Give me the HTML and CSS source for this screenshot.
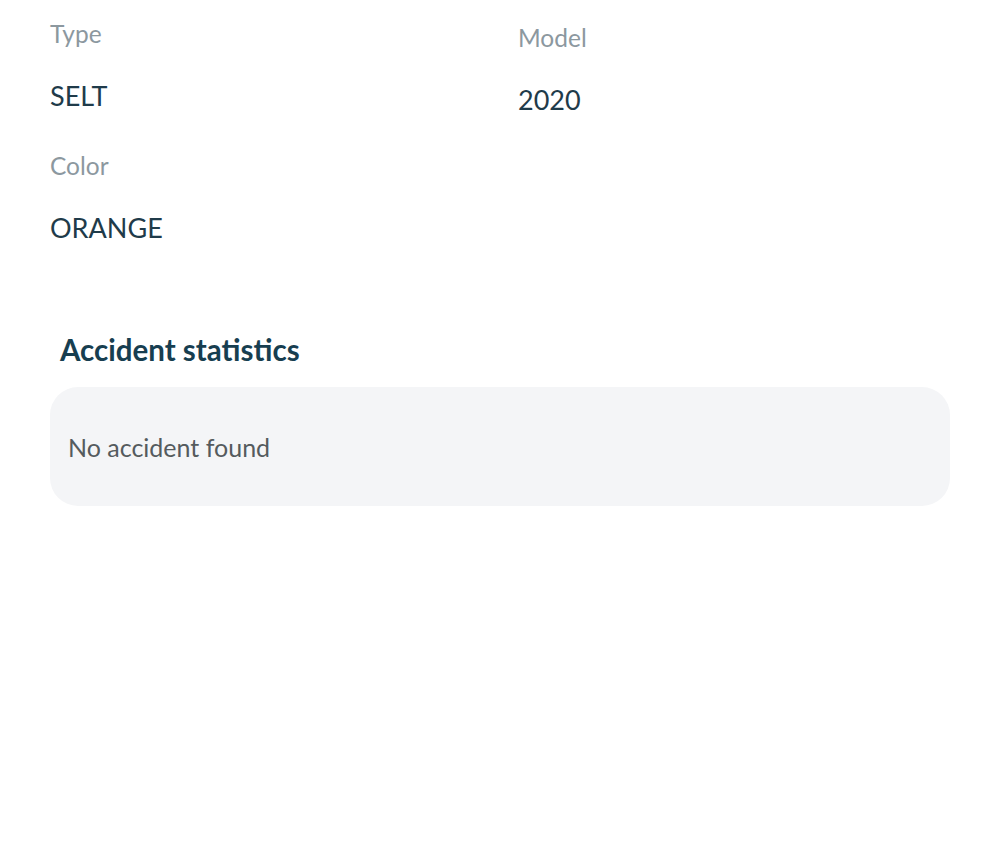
FILE: index.html
```html
<!DOCTYPE html>
<html lang="en">
<head>
    <meta charset="UTF-8">
    <meta name="viewport" content="width=device-width, initial-scale=1.0">
    <title>Vehicle details</title>
    <link rel="stylesheet" href="styles.css">
</head>
<body>
    <div class="page">
        <!-- Vehicle info -->
        <div class="details">
            <div class="field">
                <div class="label">Type</div>
                <div class="value">SELT</div>
            </div>
            <div class="field model">
                <div class="label">Model</div>
                <div class="value">2020</div>
            </div>
            <div class="field">
                <div class="label">Color</div>
                <div class="value">ORANGE</div>
            </div>
        </div>

        <!-- Accidents -->
        <h2 class="section-title">Accident statistics</h2>
        <div class="empty-card">No accident found</div>
    </div>
</body>
</html>
```

FILE: styles.css
```css
* {
    margin: 0;
    padding: 0;
    box-sizing: border-box;
    font-family: Lato, "Open Sans", sans-serif;
}

body {
    background: #fff;
    width: 1000px;
    height: 856px;
}

.page {
    padding: 18px 50px 0 50px;
}

.details {
    display: grid;
    grid-template-columns: 468px 1fr;
    row-gap: 34px;
}

.field {
    display: flex;
    flex-direction: column;
    gap: 30px;
}

.field.model {
    padding-top: 4px;
}

.label {
    font-size: 24.5px;
    line-height: 32px;
    color: #8c989f;
}

.value {
    font-size: 27px;
    line-height: 32px;
    color: #1f3b4a;
}

.section-title {
    margin: 90px 0 21px 10px;
    font-size: 29.5px;
    line-height: 32px;
    font-weight: 700;
    color: #173e50;
}

.empty-card {
    width: 900px;
    height: 119px;
    display: flex;
    align-items: center;
    padding-left: 18px;
    background: #f4f5f7;
    border-radius: 28px;
    font-size: 25px;
    color: #555b5e;
}
```
